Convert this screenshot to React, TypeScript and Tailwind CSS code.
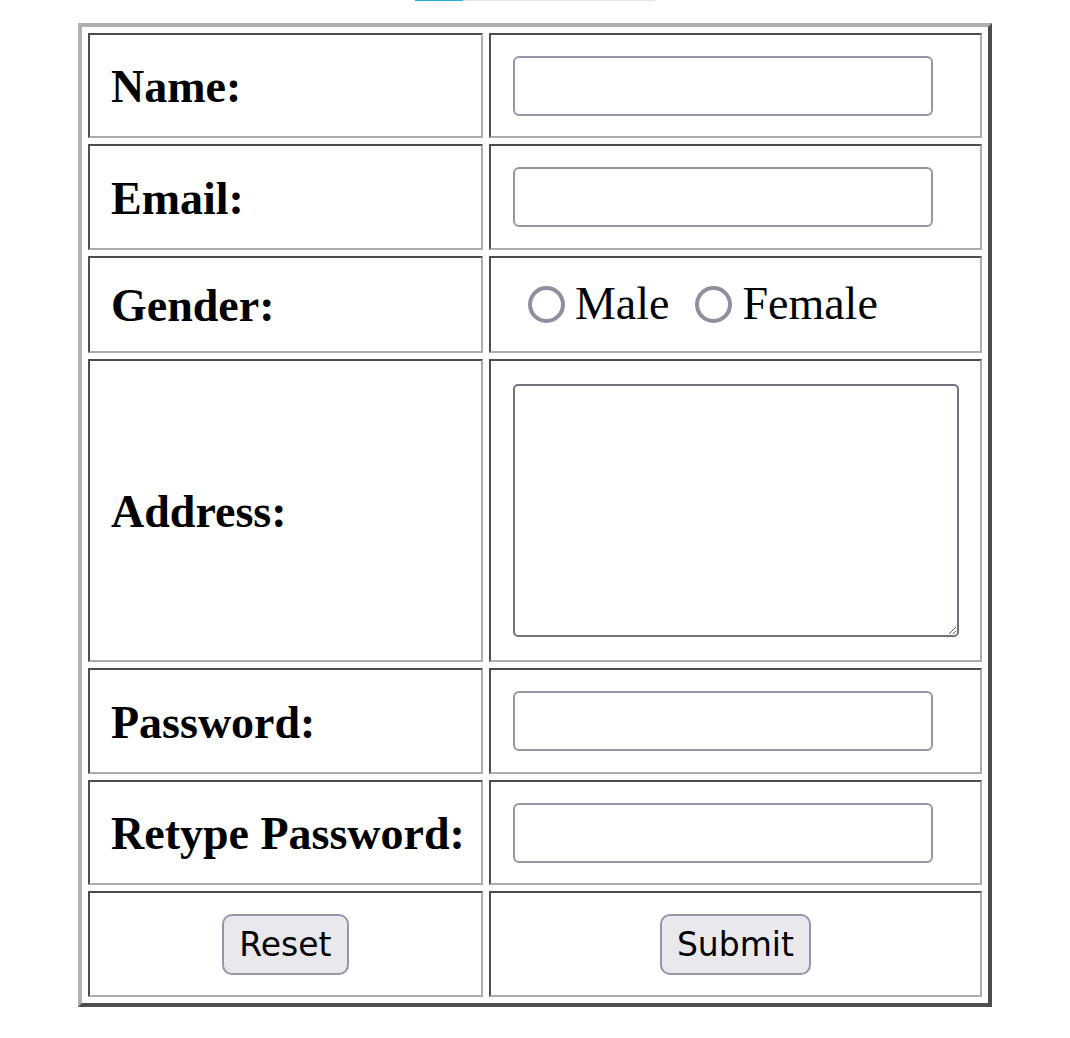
const serif = { fontFamily: '"Liberation Serif", "Times New Roman", serif' }

const labelCell =
  'w-[394px] whitespace-nowrap border-2 border-solid border-t-[#4d4d4d] border-l-[#4d4d4d] border-r-[#acacac] border-b-[#acacac] pl-[21px] pr-4 pt-[4px] text-left align-middle text-[46px] font-bold leading-[1.15] text-black'
const fieldCell =
  'border-2 border-solid border-t-[#4d4d4d] border-l-[#4d4d4d] border-r-[#acacac] border-b-[#acacac] pl-[22px] pr-[21px] align-middle'
const textInput =
  'block h-[60px] w-[420px] rounded-[6px] border-2 border-solid border-[#9796a6] bg-white px-2 text-[33px] outline-none'
const btn =
  'h-[61px] rounded-[10px] border-2 border-solid border-[#9796a6] bg-[#e9e9ed] px-[15px] text-[33px] leading-none text-black'

type RowProps = {
  label: string
  height: string
  children: React.ReactNode
}

const Row = ({ label, height, children }: RowProps) => (
  <tr className={height}>
    <td className={labelCell} style={serif}>
      {label}
    </td>
    <td className={fieldCell}>{children}</td>
  </tr>
)

const Radio = ({ name, label }: { name: string; label: string }) => (
  <label className="flex items-center">
    <input
      type="radio"
      name={name}
      className="m-0 h-[37px] w-[37px] appearance-none rounded-full border-[4px] border-solid border-[#8f8f9d] bg-white"
    />
    <span className="ml-[10px] text-[46px] leading-[1.15] text-black" style={serif}>
      {label}
    </span>
  </label>
)

export default function App() {
  return (
    <div className="min-h-[1038px] w-full bg-white">
      <div className="mx-auto flex h-px w-[240px]">
        <div className="h-px w-[48px] bg-[#22b0d6]" />
        <div className="h-px flex-1 bg-[#e6e6e6]" />
      </div>
      <form className="mt-[22px]">
        <table className="mx-auto w-[914px] border-separate border-spacing-[6px] border-4 border-solid border-t-[#b0b0b0] border-l-[#b0b0b0] border-r-[#4d4d4d] border-b-[#4d4d4d]">
          <tbody>
            <Row label="Name:" height="h-[105px]">
              <input type="text" className={textInput} />
            </Row>
            <Row label="Email:" height="h-[106px]">
              <input type="email" className={textInput} />
            </Row>
            <Row label="Gender:" height="h-[97px]">
              <div className="flex items-center pl-[15px]">
                <Radio name="gender" label="Male" />
                <div className="w-[26px]" />
                <Radio name="gender" label="Female" />
              </div>
            </Row>
            <Row label="Address:" height="h-[303px]">
              <textarea className="block h-[253px] w-[446px] rounded-[5px] border-2 border-solid border-[#72727e] bg-white p-1 text-[20px] outline-none" />
            </Row>
            <Row label="Password:" height="h-[106px]">
              <input type="password" className={textInput} />
            </Row>
            <Row label="Retype Password:" height="h-[105px]">
              <input type="password" className={textInput} />
            </Row>
            <tr className="h-[106px]">
              <td className="border-2 border-solid border-t-[#4d4d4d] border-l-[#4d4d4d] border-r-[#acacac] border-b-[#acacac] text-center align-middle">
                <button type="reset" className={btn} style={{ fontFamily: '"DejaVu Sans", sans-serif' }}>
                  Reset
                </button>
              </td>
              <td className="border-2 border-solid border-t-[#4d4d4d] border-l-[#4d4d4d] border-r-[#acacac] border-b-[#acacac] text-center align-middle">
                <button type="submit" className={btn} style={{ fontFamily: '"DejaVu Sans", sans-serif' }}>
                  Submit
                </button>
              </td>
            </tr>
          </tbody>
        </table>
      </form>
    </div>
  )
}
